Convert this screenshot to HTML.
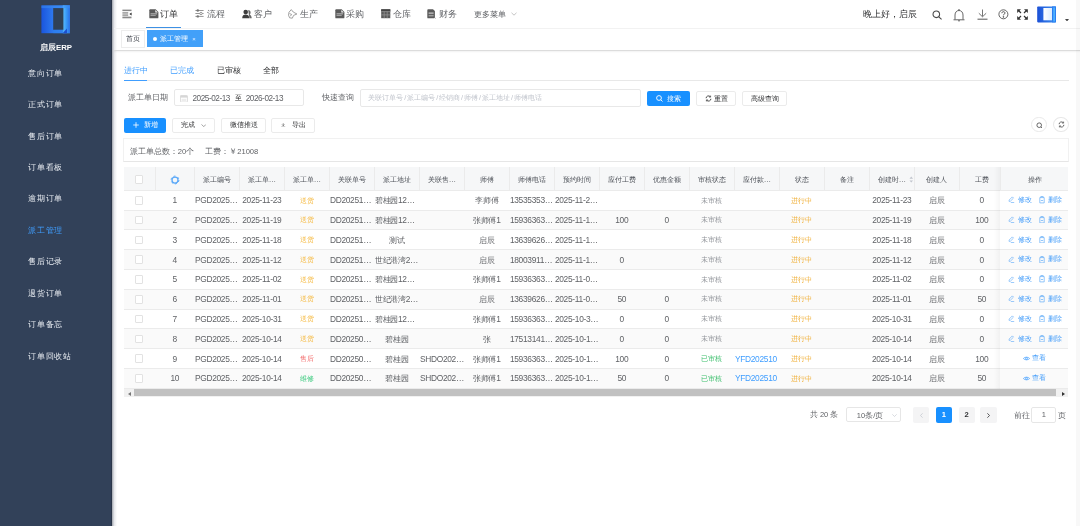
<!DOCTYPE html><html><head><meta charset="utf-8"><style>
*{box-sizing:border-box;margin:0;padding:0}
html,body{width:1080px;height:526px;overflow:hidden;background:#fff;font-family:"Liberation Sans",sans-serif;}
.a{position:absolute;white-space:nowrap}
.side{position:absolute;left:0;top:0;width:112px;height:526px;background:#324159}
.mi{position:absolute;left:28.4px;color:#f2f4f7;font-size:8px;line-height:12px;letter-spacing:0.6px}
.nav{position:absolute;top:8px;font-size:9.3px;color:#606266;line-height:13px}
.ni{position:absolute;top:9.5px}
.btn{position:absolute;border:1px solid #ebebeb;border-radius:2px;background:#fff;font-size:7px;color:#606266;text-align:center;white-space:nowrap}
.th{position:absolute;top:167px;height:24.6px;line-height:24.6px;text-align:center;font-size:7.7px;color:#606266;border-right:1px solid #ebebeb;overflow:hidden;white-space:nowrap;background:#f6f7f8}
.td{position:absolute;text-align:center;font-size:7.8px;color:#606266;overflow:hidden;white-space:nowrap}
.row{position:absolute;left:124px;width:944px;border-bottom:1px solid #ebebeb}
.cb{position:absolute;width:8.6px;height:8.6px;border:1px solid #e2e2e2;border-radius:1px;background:#fff}
i{font-style:normal;padding:0 0.95px}
</style></head><body><div style="position:absolute;left:0;top:0;width:1080px;height:526px;will-change:transform"><div class="side"></div>
<div class="a" style="left:111px;top:0;width:1px;height:526px;background:#2a3649"></div>
<div class="a" style="left:112px;top:0;width:5px;height:526px;background:linear-gradient(90deg,rgba(30,40,60,.42),rgba(60,70,100,.12) 45%,rgba(0,21,41,0))"></div>
<svg class="a" style="left:41px;top:4.5px" width="30" height="29" viewBox="0 0 30 29">
<defs><linearGradient id="lg1" x1="0" x2="1" y1="0" y2="0"><stop offset="0" stop-color="#1a55de"/><stop offset="0.45" stop-color="#2f7cf0"/><stop offset="1" stop-color="#3d92f7"/></linearGradient>
<linearGradient id="lg2" x1="0" x2="1"><stop offset="0" stop-color="#5cc0ff"/><stop offset="0.5" stop-color="#3a9af8"/><stop offset="1" stop-color="#2a6fe6"/></linearGradient></defs>
<rect x="0.4" y="0.4" width="28.5" height="27.8" fill="url(#lg1)"/>
<rect x="21.8" y="0.4" width="7.1" height="27.8" fill="url(#lg2)"/>
<rect x="0.4" y="0.4" width="28.5" height="2.7" fill="#3a8cf4" opacity=".55"/>
<rect x="12.2" y="3.1" width="10.2" height="21.7" fill="#304156"/>
<path d="M21.5 28.2 L26 23.6 L26 28.2 Z" fill="#1d4fcf"/>
<rect x="12.2" y="24.8" width="10.2" height="3.4" fill="#2c7ef0" opacity=".6"/>
</svg>
<div class="a" style="left:40px;top:41.5px;font-size:7.8px;font-weight:bold;color:#fff;line-height:12px">启辰ERP</div>
<div class="mi a" style="top:67.60px;color:#e8ecf1">意向订单</div>
<div class="mi a" style="top:99.05px;color:#e8ecf1">正式订单</div>
<div class="mi a" style="top:130.50px;color:#e8ecf1">售后订单</div>
<div class="mi a" style="top:161.95px;color:#e8ecf1">订单看板</div>
<div class="mi a" style="top:193.40px;color:#e8ecf1">逾期订单</div>
<div class="mi a" style="top:224.85px;color:#409eff">派工管理</div>
<div class="mi a" style="top:256.30px;color:#e8ecf1">售后记录</div>
<div class="mi a" style="top:287.75px;color:#e8ecf1">退货订单</div>
<div class="mi a" style="top:319.20px;color:#e8ecf1">订单备忘</div>
<div class="mi a" style="top:350.65px;color:#e8ecf1">订单回收站</div>
<div class="a" style="left:114px;top:28.2px;width:966px;height:1px;background:#f2f2f2"></div>
<svg class="a" style="left:121.5px;top:8.5px" width="10" height="10" viewBox="0 0 10 10">
<rect x="0.4" y="0.6" width="9.1" height="1.5" fill="#8a8a8a"/><rect x="0.4" y="3.5" width="5.8" height="0.9" fill="#555"/>
<rect x="0.4" y="5.6" width="5.8" height="0.9" fill="#555"/><rect x="0.4" y="7.6" width="9.1" height="1.7" fill="#8a8a8a"/>
<path d="M9.6 3.4 L7.3 5 L9.6 6.6 Z" fill="#333"/></svg>
<div class="nav" style="left:160.3px;color:#303133">订单</div>
<div class="nav" style="left:206.9px;color:#606266">流程</div>
<div class="nav" style="left:253.5px;color:#606266">客户</div>
<div class="nav" style="left:299.7px;color:#606266">生产</div>
<div class="nav" style="left:346px;color:#606266">采购</div>
<div class="nav" style="left:393px;color:#606266">仓库</div>
<div class="nav" style="left:438.7px;color:#606266">财务</div>
<svg class="a" style="left:149px;top:8.8px" width="10" height="10" viewBox="0 0 10 10">
<path d="M1.2 0.3 H6.6 L9.4 3.1 V8.4 Q9.4 9.3 8.5 9.3 H1.2 Q0.3 9.3 0.3 8.4 V1.2 Q0.3 0.3 1.2 0.3 Z" fill="#5a5a5a"/>
<path d="M6.3 0.9 L8.8 3.4 H6.3 Z" fill="#f4f4f4"/>
<rect x="1.5" y="4.3" width="6.6" height="1.1" fill="#b8b8b8"/><rect x="1.5" y="6.1" width="5.2" height="0.9" fill="#a8a8a8"/></svg>
<svg class="a" style="left:334.6px;top:8.8px" width="10" height="10" viewBox="0 0 10 10">
<path d="M1.2 0.3 H6.6 L9.4 3.1 V8.4 Q9.4 9.3 8.5 9.3 H1.2 Q0.3 9.3 0.3 8.4 V1.2 Q0.3 0.3 1.2 0.3 Z" fill="#5a5a5a"/>
<path d="M6.3 0.9 L8.8 3.4 H6.3 Z" fill="#f4f4f4"/>
<rect x="1.5" y="4.3" width="6.6" height="1.1" fill="#b8b8b8"/><rect x="1.5" y="6.1" width="5.2" height="0.9" fill="#a8a8a8"/></svg>
<svg class="a" style="left:195.3px;top:9px" width="9" height="9" viewBox="0 0 9 9" fill="none" stroke="#8a8a8a" stroke-width="0.9">
<line x1="0.4" y1="1.5" x2="8.6" y2="1.5"/><line x1="0.4" y1="4.5" x2="8.6" y2="4.5"/><line x1="0.4" y1="7.4" x2="8.6" y2="7.4"/>
<circle cx="2.8" cy="1.5" r="1.2" fill="#777" stroke="none"/><circle cx="6" cy="4.5" r="1.2" fill="#fff"/><circle cx="2.8" cy="7.4" r="1.2" fill="#777" stroke="none"/></svg>
<svg class="a" style="left:241.8px;top:8.8px" width="10" height="10" viewBox="0 0 10 10">
<path d="M6.2 0.9 C7.7 0.9 8.6 2.1 8.6 3.4 C8.6 4.5 8 5.3 7.4 5.6 C8.9 6.2 9.7 7.6 9.7 9.2 H7.4 Z" fill="#666"/>
<circle cx="3.7" cy="3" r="2.3" fill="#3e3e3e"/><path d="M0.2 9.2 C0.2 6.5 1.7 5.5 3.7 5.5 C5.7 5.5 7.2 6.5 7.2 9.2 Z" fill="#3e3e3e"/></svg>
<svg class="a" style="left:287.8px;top:8.6px" width="10" height="10" viewBox="0 0 10 10" fill="none" stroke="#8a8a8a" stroke-width="0.8">
<path d="M3.3 0.6 L5.2 3 L8.9 5 L5.6 6.4 L4.3 9.2 L1.6 8.8 L0.5 6.2 L1 3.2 Z"/><path d="M1.5 4.6 L3.6 5.4 L2.4 7.2"/></svg>
<svg class="a" style="left:380.7px;top:8.8px" width="10" height="10" viewBox="0 0 10 10">
<rect x="0.2" y="0.3" width="9.1" height="8.9" fill="#5a5a5a"/><rect x="0.2" y="0.3" width="9.1" height="2" fill="#444"/>
<path d="M0.2 2.6 H9.3 M0.2 5.9 H9.3 M3.2 2.6 V9.2 M6.2 2.6 V9.2" stroke="#9a9a9a" stroke-width="0.7"/></svg>
<svg class="a" style="left:427px;top:8.8px" width="9" height="10" viewBox="0 0 9 10">
<path d="M1.2 0.3 H6 L7.9 2 V8.3 Q7.9 9.3 7 9.3 H1.2 Q0.3 9.3 0.3 8.4 V1.2 Q0.3 0.3 1.2 0.3 Z" fill="#5a5a5a"/>
<rect x="1.6" y="3.3" width="5" height="1.8" fill="#aaa"/><rect x="1.6" y="6.3" width="5" height="1" fill="#bbb"/><path d="M7.2 8 L8.6 9.6" stroke="#777" stroke-width="0.6"/></svg>
<div class="a" style="left:146px;top:26.5px;width:35.2px;height:1.4px;background:#3d90e4"></div>
<div class="a" style="left:473.5px;top:8.5px;font-size:7.9px;color:#606266;line-height:11px">更多菜单</div>
<svg class="a" style="left:510.5px;top:12px" width="6" height="4" viewBox="0 0 6 4" fill="none" stroke="#aaa" stroke-width="0.7"><path d="M0.5 0.8 L3 3.2 L5.5 0.8"/></svg>
<div class="a" style="left:862.5px;top:7.8px;font-size:9.2px;color:#303133;line-height:13px">晚上好，启辰</div>
<svg class="a" style="left:932.3px;top:10.2px" width="11" height="10" viewBox="0 0 11 10" fill="none" stroke="#4a4a4a" stroke-width="1.05"><circle cx="4.3" cy="4.3" r="3.3"/><line x1="6.8" y1="6.8" x2="9.6" y2="9.4"/></svg>
<svg class="a" style="left:953px;top:8.5px" width="12" height="13" viewBox="0 0 12 13" fill="none" stroke="#555" stroke-width="0.9"><path d="M2 10.5 V6 C2 3.2 3.8 1.5 6 1.5 C8.2 1.5 10 3.2 10 6 V10.5"/><line x1="0.5" y1="10.8" x2="11.5" y2="10.8"/><path d="M5 11.8 H7"/><circle cx="6" cy="0.9" r="0.4"/></svg>
<svg class="a" style="left:976.5px;top:9px" width="11" height="11" viewBox="0 0 11 11" fill="none" stroke="#666" stroke-width="0.9"><line x1="5.5" y1="0.5" x2="5.5" y2="7.5"/><path d="M1.8 4.2 L5.5 7.8 L9.2 4.2"/><line x1="0.5" y1="10.2" x2="10.5" y2="10.2" stroke-width="1.1"/></svg>
<svg class="a" style="left:997.5px;top:8.8px" width="11" height="11" viewBox="0 0 11 11" fill="none" stroke="#4a4a4a" stroke-width="0.85"><circle cx="5.4" cy="5.3" r="4.5"/><path d="M3.9 4.2 C3.9 3.2 4.6 2.7 5.4 2.7 C6.3 2.7 7 3.2 7 4.1 C7 5.1 5.4 5.1 5.4 6.3" stroke-width="1"/><circle cx="5.4" cy="7.9" r="0.45" fill="#4a4a4a"/></svg>
<svg class="a" style="left:1017px;top:9px" width="11" height="11" viewBox="0 0 11 11" fill="#333" stroke="#333" stroke-width="1.2"><path d="M0.2 0.2 H4 L0.2 4 Z" stroke="none"/><path d="M10.8 0.2 H7 L10.8 4 Z" stroke="none"/><path d="M0.2 10.8 H4 L0.2 7 Z" stroke="none"/><path d="M10.8 10.8 H7 L10.8 7 Z" stroke="none"/><path d="M1.5 1.5 L4 4 M9.5 1.5 L7 4 M1.5 9.5 L4 7 M9.5 9.5 L7 7"/></svg>
<svg class="a" style="left:1037px;top:5.8px" width="20" height="17" viewBox="0 0 20 17">
<defs><linearGradient id="lg3" x1="0" x2="1"><stop offset="0" stop-color="#1b50d6"/><stop offset="1" stop-color="#3c8ff2"/></linearGradient>
<linearGradient id="lg4" x1="0" x2="1"><stop offset="0" stop-color="#ffffff"/><stop offset="1" stop-color="#dcecff"/></linearGradient></defs>
<rect x="0.2" y="0.4" width="18.8" height="16" rx="0.8" fill="url(#lg3)"/><rect x="15" y="0.4" width="4" height="16" fill="#2a7df0"/><rect x="16.2" y="1.5" width="1.8" height="14" fill="#4bb0ff"/>
<rect x="6.4" y="2" width="8.6" height="12.3" fill="url(#lg4)"/></svg>
<svg class="a" style="left:1064.5px;top:18.8px" width="4" height="2.5" viewBox="0 0 4 2.5"><path d="M0 0 H4 L2 2.5 Z" fill="#444"/></svg>
<div class="a" style="left:114px;top:49.8px;width:966px;height:1px;background:#dcdcdc"></div>
<div class="a" style="left:114px;top:51px;width:966px;height:1.5px;background:linear-gradient(rgba(0,0,0,.05),rgba(0,0,0,0))"></div>
<div class="a" style="left:121px;top:30px;width:24px;height:17.5px;border:1px solid #ededed;background:#fff;font-size:7px;color:#3a3e46;text-align:center;line-height:15.5px">首页</div>
<div class="a" style="left:147px;top:30px;width:56px;height:17.3px;background:#42a0f9;"></div>
<div class="a" style="left:152.6px;top:36.6px;width:4.4px;height:4.4px;border-radius:50%;background:#fff"></div>
<div class="a" style="left:160px;top:33px;font-size:6.9px;color:#fff;line-height:11px">派工管理</div>
<div class="a" style="left:192.2px;top:33.5px;font-size:6px;color:#e6f0ff;line-height:11px">×</div>
<div class="a" style="left:1075.5px;top:0px;width:4.5px;height:526px;background:rgba(0,0,0,.028)"></div>
<div class="a" style="left:123.7px;top:64.7px;font-size:8px;color:#409eff;line-height:11px">进行中</div>
<div class="a" style="left:170.3px;top:64.7px;font-size:8px;color:#409eff;line-height:11px">已完成</div>
<div class="a" style="left:216.7px;top:64.7px;font-size:8px;color:#303133;line-height:11px">已审核</div>
<div class="a" style="left:262.5px;top:64.7px;font-size:8px;color:#303133;line-height:11px">全部</div>
<div class="a" style="left:123.5px;top:80.2px;width:945px;height:1px;background:#e8e8e8"></div>
<div class="a" style="left:123.7px;top:79.6px;width:23.6px;height:1.6px;background:#409eff"></div>
<div class="a" style="left:127.8px;top:92px;font-size:8px;color:#606266;line-height:11px">派工单日期</div>
<div class="a" style="left:174.2px;top:89.2px;width:129.5px;height:17.2px;border:1px solid #e8e8e8;border-radius:2px"></div>
<svg class="a" style="left:180.2px;top:94.6px" width="8" height="7.5" viewBox="0 0 8 7.5"><rect x="0.4" y="0.6" width="7" height="6.5" rx="0.6" fill="none" stroke="#d2d2d2" stroke-width="0.8"/><rect x="0.4" y="0.6" width="7" height="2" fill="#d6d6d6"/><rect x="1.6" y="3.8" width="4.6" height="2.2" fill="#ececec"/></svg>
<div class="a" style="left:192.5px;top:93.1px;font-size:8.2px;letter-spacing:-0.45px;color:#606266;line-height:11px">2025-02-13</div>
<div class="a" style="left:234.6px;top:92.4px;font-size:7.4px;color:#222;line-height:11px">至</div>
<div class="a" style="left:245.7px;top:93.1px;font-size:8.2px;letter-spacing:-0.45px;color:#606266;line-height:11px">2026-02-13</div>
<div class="a" style="left:322px;top:92px;font-size:8px;color:#606266;line-height:11px">快速查询</div>
<div class="a" style="left:360.2px;top:89.2px;width:281px;height:18px;border:1px solid #e8e8e8;border-radius:2px"></div>
<div class="a" style="left:368.3px;top:91.8px;font-size:7.35px;color:#c0c4cc;line-height:11px">关联订单号<i>/</i>派工编号<i>/</i>经销商<i>/</i>师傅<i>/</i>派工地址<i>/</i>师傅电话</div>
<div class="a" style="left:647px;top:90.6px;width:42.6px;height:15.4px;background:#1890ff;border-radius:2px"></div>
<svg class="a" style="left:656px;top:95px" width="7" height="7" viewBox="0 0 7 7" fill="none" stroke="#fff" stroke-width="0.9"><circle cx="3" cy="3" r="2.4"/><line x1="4.8" y1="4.8" x2="6.5" y2="6.5"/></svg>
<div class="a" style="left:667.2px;top:93.8px;font-size:6.9px;color:#fff;line-height:10px">搜索</div>
<div class="btn" style="left:695.5px;top:90.6px;width:40.8px;height:15.4px"></div>
<svg class="a" style="left:704.8px;top:94.8px" width="7" height="7" viewBox="0 0 7 7" fill="none" stroke="#333" stroke-width="0.85"><path d="M1.1 3.2 A2.4 2.4 0 0 1 5.2 1.6"/><path d="M5.9 3.8 A2.4 2.4 0 0 1 1.8 5.4"/><path d="M5.6 0.6 V2.1 H4.1" stroke-width="0.7"/><path d="M1.4 6.4 V4.9 H2.9" stroke-width="0.7"/></svg>
<div class="a" style="left:714px;top:93.8px;font-size:6.9px;color:#303133;line-height:10px">重置</div>
<div class="btn" style="left:742.2px;top:90.6px;width:44.5px;height:15.4px"></div>
<div class="a" style="left:751px;top:93.8px;font-size:6.9px;color:#303133;line-height:10px">高级查询</div>
<div class="a" style="left:124px;top:117.7px;width:42.4px;height:15.3px;background:#1890ff;border-radius:2px"></div>
<svg class="a" style="left:133px;top:122.2px" width="6" height="6" viewBox="0 0 6 6"><path d="M3 0.2 V5.8 M0.2 3 H5.8" stroke="#fff" stroke-width="0.8"/></svg>
<div class="a" style="left:144px;top:120px;font-size:6.9px;color:#fff;line-height:10px">新增</div>
<div class="btn" style="left:172.3px;top:117.7px;width:43.1px;height:15.3px"></div>
<div class="a" style="left:181px;top:120px;font-size:7.1px;color:#303133;line-height:10px">完成</div>
<svg class="a" style="left:200.5px;top:123.5px" width="5.5" height="3.5" viewBox="0 0 6 4" fill="none" stroke="#777" stroke-width="0.8"><path d="M0.5 0.5 L3 3 L5.5 0.5"/></svg>
<div class="btn" style="left:221.3px;top:117.7px;width:44.3px;height:15.3px"></div>
<div class="a" style="left:229.6px;top:120px;font-size:6.9px;color:#303133;line-height:10px">微信推送</div>
<div class="btn" style="left:271.4px;top:117.7px;width:43.2px;height:15.3px"></div>
<svg class="a" style="left:281px;top:122.5px" width="4.5" height="4.5" viewBox="0 0 5 5" fill="none" stroke="#555" stroke-width="0.7"><path d="M2.5 0.3 V3 M1.2 1.7 L2.5 3 L3.8 1.7 M0.3 4.5 H4.7"/></svg>
<div class="a" style="left:291.9px;top:120px;font-size:6.9px;color:#303133;line-height:10px">导出</div>
<div class="a" style="left:1031.4px;top:117.1px;width:15.2px;height:15.2px;border:1px solid #e8e8e8;border-radius:50%"></div>
<svg class="a" style="left:1036px;top:121.6px" width="7" height="7" viewBox="0 0 7 7" fill="none" stroke="#444" stroke-width="0.8"><circle cx="3.2" cy="3.2" r="2.3"/><line x1="4.9" y1="4.9" x2="6" y2="6"/></svg>
<div class="a" style="left:1053.3px;top:117.1px;width:15.4px;height:15.2px;border:1px solid #e8e8e8;border-radius:50%"></div>
<svg class="a" style="left:1057.8px;top:121.4px" width="7" height="7" viewBox="0 0 7 7" fill="none" stroke="#444" stroke-width="0.8"><path d="M1.1 3.2 A2.4 2.4 0 0 1 5.2 1.6"/><path d="M5.9 3.8 A2.4 2.4 0 0 1 1.8 5.4"/><path d="M5.6 0.6 V2.1 H4.1" stroke-width="0.7"/><path d="M1.4 6.4 V4.9 H2.9" stroke-width="0.7"/></svg>
<div class="a" style="left:123.3px;top:138.4px;width:945.4px;height:23.4px;border:1px solid #f1f1f1;border-bottom-color:#e6e6e6"></div>
<div class="a" style="left:129.8px;top:145.5px;font-size:7.6px;color:#606266;line-height:11px">派工单总数：20个</div>
<div class="a" style="left:205.2px;top:145.5px;font-size:7.6px;color:#606266;line-height:11px">工费：￥21008</div>
<div class="a" style="left:124px;top:167px;width:944.3px;height:23.80000000000001px;background:#f6f7f8;border-bottom:1px solid #ebebeb"></div>
<div class="a" style="left:155.10px;top:167px;width:1px;height:23.80px;background:#ebebeb"></div>
<div class="a" style="left:194.10px;top:167px;width:1px;height:23.80px;background:#ebebeb"></div>
<div class="a" style="left:239.10px;top:167px;width:1px;height:23.80px;background:#ebebeb"></div>
<div class="a" style="left:194.3px;top:168px;width:45.00px;height:23.80px;line-height:23.80px;text-align:center;font-size:7.3px;color:#4e5259">派工编号</div>
<div class="a" style="left:284.10px;top:167px;width:1px;height:23.80px;background:#ebebeb"></div>
<div class="a" style="left:239.3px;top:168px;width:45.00px;height:23.80px;line-height:23.80px;text-align:center;font-size:7.3px;color:#4e5259">派工单…</div>
<div class="a" style="left:329.10px;top:167px;width:1px;height:23.80px;background:#ebebeb"></div>
<div class="a" style="left:284.3px;top:168px;width:45.00px;height:23.80px;line-height:23.80px;text-align:center;font-size:7.3px;color:#4e5259">派工单…</div>
<div class="a" style="left:374.10px;top:167px;width:1px;height:23.80px;background:#ebebeb"></div>
<div class="a" style="left:329.3px;top:168px;width:45.00px;height:23.80px;line-height:23.80px;text-align:center;font-size:7.3px;color:#4e5259">关联单号</div>
<div class="a" style="left:419.10px;top:167px;width:1px;height:23.80px;background:#ebebeb"></div>
<div class="a" style="left:374.3px;top:168px;width:45.00px;height:23.80px;line-height:23.80px;text-align:center;font-size:7.3px;color:#4e5259">派工地址</div>
<div class="a" style="left:464.10px;top:167px;width:1px;height:23.80px;background:#ebebeb"></div>
<div class="a" style="left:419.3px;top:168px;width:45.00px;height:23.80px;line-height:23.80px;text-align:center;font-size:7.3px;color:#4e5259">关联售…</div>
<div class="a" style="left:509.10px;top:167px;width:1px;height:23.80px;background:#ebebeb"></div>
<div class="a" style="left:464.3px;top:168px;width:45.00px;height:23.80px;line-height:23.80px;text-align:center;font-size:7.3px;color:#4e5259">师傅</div>
<div class="a" style="left:554.10px;top:167px;width:1px;height:23.80px;background:#ebebeb"></div>
<div class="a" style="left:509.3px;top:168px;width:45.00px;height:23.80px;line-height:23.80px;text-align:center;font-size:7.3px;color:#4e5259">师傅电话</div>
<div class="a" style="left:599.10px;top:167px;width:1px;height:23.80px;background:#ebebeb"></div>
<div class="a" style="left:554.3px;top:168px;width:45.00px;height:23.80px;line-height:23.80px;text-align:center;font-size:7.3px;color:#4e5259">预约时间</div>
<div class="a" style="left:644.10px;top:167px;width:1px;height:23.80px;background:#ebebeb"></div>
<div class="a" style="left:599.3px;top:168px;width:45.00px;height:23.80px;line-height:23.80px;text-align:center;font-size:7.3px;color:#4e5259">应付工费</div>
<div class="a" style="left:689.10px;top:167px;width:1px;height:23.80px;background:#ebebeb"></div>
<div class="a" style="left:644.3px;top:168px;width:45.00px;height:23.80px;line-height:23.80px;text-align:center;font-size:7.3px;color:#4e5259">优惠金额</div>
<div class="a" style="left:734.10px;top:167px;width:1px;height:23.80px;background:#ebebeb"></div>
<div class="a" style="left:689.3px;top:168px;width:45.00px;height:23.80px;line-height:23.80px;text-align:center;font-size:7.3px;color:#4e5259">审核状态</div>
<div class="a" style="left:779.10px;top:167px;width:1px;height:23.80px;background:#ebebeb"></div>
<div class="a" style="left:734.3px;top:168px;width:45.00px;height:23.80px;line-height:23.80px;text-align:center;font-size:7.3px;color:#4e5259">应付款…</div>
<div class="a" style="left:824.10px;top:167px;width:1px;height:23.80px;background:#ebebeb"></div>
<div class="a" style="left:779.3px;top:168px;width:45.00px;height:23.80px;line-height:23.80px;text-align:center;font-size:7.3px;color:#4e5259">状态</div>
<div class="a" style="left:869.10px;top:167px;width:1px;height:23.80px;background:#ebebeb"></div>
<div class="a" style="left:824.3px;top:168px;width:45.00px;height:23.80px;line-height:23.80px;text-align:center;font-size:7.3px;color:#4e5259">备注</div>
<div class="a" style="left:914.10px;top:167px;width:1px;height:23.80px;background:#ebebeb"></div>
<div class="a" style="left:869.3px;top:168px;width:45.00px;height:23.80px;line-height:23.80px;text-align:center;font-size:7.3px;color:#4e5259">创建时…</div>
<div class="a" style="left:959.10px;top:167px;width:1px;height:23.80px;background:#ebebeb"></div>
<div class="a" style="left:914.3px;top:168px;width:45.00px;height:23.80px;line-height:23.80px;text-align:center;font-size:7.3px;color:#4e5259">创建人</div>
<div class="a" style="left:1004.10px;top:167px;width:1px;height:23.80px;background:#ebebeb"></div>
<div class="a" style="left:959.3px;top:168px;width:45.00px;height:23.80px;line-height:23.80px;text-align:center;font-size:7.3px;color:#4e5259">工费</div>
<svg class="a" style="left:169.8px;top:174.6px" width="10" height="10" viewBox="0 0 10 10" fill="none" stroke="#5aa8f8"><circle cx="5" cy="5" r="3.0" stroke-width="1.25"/><circle cx="5" cy="5" r="3.9" stroke-width="1.0" stroke-dasharray="2.05 2.05"/></svg>
<div class="cb a" style="left:134.8px;top:175.3px"></div>
<svg class="a" style="left:908.8px;top:176px" width="4.5" height="7" viewBox="0 0 5 8"><path d="M2.5 0.5 L4.5 3 H0.5 Z" fill="#c0c4cc"/><path d="M2.5 7.5 L4.5 5 H0.5 Z" fill="#c0c4cc"/></svg>
<div class="a" style="left:124px;top:190.80px;width:944.3px;height:19.79px;background:#fff;border-bottom:1px solid #ebebeb"></div>
<div class="cb a" style="left:134.8px;top:196.00px"></div>
<div class="a" style="left:155.3px;top:191.30px;width:39.00px;height:19.79px;line-height:19.79px;text-align:center;font-size:8.4px;letter-spacing:-0.3px;font-weight:normal;color:#606266;overflow:hidden">1</div>
<div class="a" style="left:194.3px;top:191.30px;width:45.00px;height:19.79px;line-height:19.79px;text-align:left;padding-left:0.6px;font-size:8.4px;letter-spacing:-0.3px;font-weight:normal;color:#606266;overflow:hidden">PGD2025…</div>
<div class="a" style="left:239.3px;top:191.30px;width:45.00px;height:19.79px;line-height:19.79px;text-align:center;font-size:8.4px;letter-spacing:-0.3px;font-weight:normal;color:#606266;overflow:hidden">2025-11-23</div>
<div class="a" style="left:284.3px;top:190.50px;width:45.00px;height:19.79px;line-height:19.79px;text-align:center;font-size:6.5px;letter-spacing:0px;font-weight:normal;color:#f5b83d;overflow:hidden">送货</div>
<div class="a" style="left:329.3px;top:191.30px;width:45.00px;height:19.79px;line-height:19.79px;text-align:left;padding-left:0.6px;font-size:8.4px;letter-spacing:-0.3px;font-weight:normal;color:#606266;overflow:hidden">DD20251…</div>
<div class="a" style="left:374.3px;top:191.30px;width:45.00px;height:19.79px;line-height:19.79px;text-align:left;padding-left:0.6px;font-size:8.4px;letter-spacing:-0.3px;font-weight:normal;color:#606266;overflow:hidden">碧桂园12…</div>
<div class="a" style="left:464.3px;top:191.30px;width:45.00px;height:19.79px;line-height:19.79px;text-align:center;font-size:8.4px;letter-spacing:-0.3px;font-weight:normal;color:#606266;overflow:hidden">李师傅</div>
<div class="a" style="left:509.3px;top:191.30px;width:45.00px;height:19.79px;line-height:19.79px;text-align:left;padding-left:0.6px;font-size:8.4px;letter-spacing:-0.3px;font-weight:normal;color:#606266;overflow:hidden">13535353…</div>
<div class="a" style="left:554.3px;top:191.30px;width:45.00px;height:19.79px;line-height:19.79px;text-align:left;padding-left:0.6px;font-size:8.4px;letter-spacing:-0.3px;font-weight:normal;color:#606266;overflow:hidden">2025-11-2…</div>
<div class="a" style="left:689.3px;top:190.50px;width:45.00px;height:19.79px;line-height:19.79px;text-align:center;font-size:6.9px;letter-spacing:0px;font-weight:normal;color:#909399;overflow:hidden">未审核</div>
<div class="a" style="left:779.3px;top:190.50px;width:45.00px;height:19.79px;line-height:19.79px;text-align:center;font-size:6.9px;letter-spacing:0px;font-weight:normal;color:#f0b03a;overflow:hidden">进行中</div>
<div class="a" style="left:869.3px;top:191.30px;width:45.00px;height:19.79px;line-height:19.79px;text-align:center;font-size:8.4px;letter-spacing:-0.3px;font-weight:normal;color:#606266;overflow:hidden">2025-11-23</div>
<div class="a" style="left:914.3px;top:191.30px;width:45.00px;height:19.79px;line-height:19.79px;text-align:center;font-size:8.4px;letter-spacing:-0.3px;font-weight:normal;color:#606266;overflow:hidden">启辰</div>
<div class="a" style="left:959.3px;top:191.30px;width:45.00px;height:19.79px;line-height:19.79px;text-align:center;font-size:8.4px;letter-spacing:-0.3px;font-weight:normal;color:#606266;overflow:hidden">0</div>
<div class="a" style="left:124px;top:210.59px;width:944.3px;height:19.79px;background:#fafafa;border-bottom:1px solid #ebebeb"></div>
<div class="cb a" style="left:134.8px;top:215.79px"></div>
<div class="a" style="left:155.3px;top:211.09px;width:39.00px;height:19.79px;line-height:19.79px;text-align:center;font-size:8.4px;letter-spacing:-0.3px;font-weight:normal;color:#606266;overflow:hidden">2</div>
<div class="a" style="left:194.3px;top:211.09px;width:45.00px;height:19.79px;line-height:19.79px;text-align:left;padding-left:0.6px;font-size:8.4px;letter-spacing:-0.3px;font-weight:normal;color:#606266;overflow:hidden">PGD2025…</div>
<div class="a" style="left:239.3px;top:211.09px;width:45.00px;height:19.79px;line-height:19.79px;text-align:center;font-size:8.4px;letter-spacing:-0.3px;font-weight:normal;color:#606266;overflow:hidden">2025-11-19</div>
<div class="a" style="left:284.3px;top:210.29px;width:45.00px;height:19.79px;line-height:19.79px;text-align:center;font-size:6.5px;letter-spacing:0px;font-weight:normal;color:#f5b83d;overflow:hidden">送货</div>
<div class="a" style="left:329.3px;top:211.09px;width:45.00px;height:19.79px;line-height:19.79px;text-align:left;padding-left:0.6px;font-size:8.4px;letter-spacing:-0.3px;font-weight:normal;color:#606266;overflow:hidden">DD20251…</div>
<div class="a" style="left:374.3px;top:211.09px;width:45.00px;height:19.79px;line-height:19.79px;text-align:left;padding-left:0.6px;font-size:8.4px;letter-spacing:-0.3px;font-weight:normal;color:#606266;overflow:hidden">碧桂园12…</div>
<div class="a" style="left:464.3px;top:211.09px;width:45.00px;height:19.79px;line-height:19.79px;text-align:center;font-size:8.4px;letter-spacing:-0.3px;font-weight:normal;color:#606266;overflow:hidden">张师傅1</div>
<div class="a" style="left:509.3px;top:211.09px;width:45.00px;height:19.79px;line-height:19.79px;text-align:left;padding-left:0.6px;font-size:8.4px;letter-spacing:-0.3px;font-weight:normal;color:#606266;overflow:hidden">15936363…</div>
<div class="a" style="left:554.3px;top:211.09px;width:45.00px;height:19.79px;line-height:19.79px;text-align:left;padding-left:0.6px;font-size:8.4px;letter-spacing:-0.3px;font-weight:normal;color:#606266;overflow:hidden">2025-11-1…</div>
<div class="a" style="left:599.3px;top:211.09px;width:45.00px;height:19.79px;line-height:19.79px;text-align:center;font-size:8.4px;letter-spacing:-0.3px;font-weight:normal;color:#606266;overflow:hidden">100</div>
<div class="a" style="left:644.3px;top:211.09px;width:45.00px;height:19.79px;line-height:19.79px;text-align:center;font-size:8.4px;letter-spacing:-0.3px;font-weight:normal;color:#606266;overflow:hidden">0</div>
<div class="a" style="left:689.3px;top:210.29px;width:45.00px;height:19.79px;line-height:19.79px;text-align:center;font-size:6.9px;letter-spacing:0px;font-weight:normal;color:#909399;overflow:hidden">未审核</div>
<div class="a" style="left:779.3px;top:210.29px;width:45.00px;height:19.79px;line-height:19.79px;text-align:center;font-size:6.9px;letter-spacing:0px;font-weight:normal;color:#f0b03a;overflow:hidden">进行中</div>
<div class="a" style="left:869.3px;top:211.09px;width:45.00px;height:19.79px;line-height:19.79px;text-align:center;font-size:8.4px;letter-spacing:-0.3px;font-weight:normal;color:#606266;overflow:hidden">2025-11-19</div>
<div class="a" style="left:914.3px;top:211.09px;width:45.00px;height:19.79px;line-height:19.79px;text-align:center;font-size:8.4px;letter-spacing:-0.3px;font-weight:normal;color:#606266;overflow:hidden">启辰</div>
<div class="a" style="left:959.3px;top:211.09px;width:45.00px;height:19.79px;line-height:19.79px;text-align:center;font-size:8.4px;letter-spacing:-0.3px;font-weight:normal;color:#606266;overflow:hidden">100</div>
<div class="a" style="left:124px;top:230.38px;width:944.3px;height:19.79px;background:#fff;border-bottom:1px solid #ebebeb"></div>
<div class="cb a" style="left:134.8px;top:235.58px"></div>
<div class="a" style="left:155.3px;top:230.88px;width:39.00px;height:19.79px;line-height:19.79px;text-align:center;font-size:8.4px;letter-spacing:-0.3px;font-weight:normal;color:#606266;overflow:hidden">3</div>
<div class="a" style="left:194.3px;top:230.88px;width:45.00px;height:19.79px;line-height:19.79px;text-align:left;padding-left:0.6px;font-size:8.4px;letter-spacing:-0.3px;font-weight:normal;color:#606266;overflow:hidden">PGD2025…</div>
<div class="a" style="left:239.3px;top:230.88px;width:45.00px;height:19.79px;line-height:19.79px;text-align:center;font-size:8.4px;letter-spacing:-0.3px;font-weight:normal;color:#606266;overflow:hidden">2025-11-18</div>
<div class="a" style="left:284.3px;top:230.08px;width:45.00px;height:19.79px;line-height:19.79px;text-align:center;font-size:6.5px;letter-spacing:0px;font-weight:normal;color:#f5b83d;overflow:hidden">送货</div>
<div class="a" style="left:329.3px;top:230.88px;width:45.00px;height:19.79px;line-height:19.79px;text-align:left;padding-left:0.6px;font-size:8.4px;letter-spacing:-0.3px;font-weight:normal;color:#606266;overflow:hidden">DD20251…</div>
<div class="a" style="left:374.3px;top:230.88px;width:45.00px;height:19.79px;line-height:19.79px;text-align:center;font-size:8.4px;letter-spacing:-0.3px;font-weight:normal;color:#606266;overflow:hidden">测试</div>
<div class="a" style="left:464.3px;top:230.88px;width:45.00px;height:19.79px;line-height:19.79px;text-align:center;font-size:8.4px;letter-spacing:-0.3px;font-weight:normal;color:#606266;overflow:hidden">启辰</div>
<div class="a" style="left:509.3px;top:230.88px;width:45.00px;height:19.79px;line-height:19.79px;text-align:left;padding-left:0.6px;font-size:8.4px;letter-spacing:-0.3px;font-weight:normal;color:#606266;overflow:hidden">13639626…</div>
<div class="a" style="left:554.3px;top:230.88px;width:45.00px;height:19.79px;line-height:19.79px;text-align:left;padding-left:0.6px;font-size:8.4px;letter-spacing:-0.3px;font-weight:normal;color:#606266;overflow:hidden">2025-11-1…</div>
<div class="a" style="left:689.3px;top:230.08px;width:45.00px;height:19.79px;line-height:19.79px;text-align:center;font-size:6.9px;letter-spacing:0px;font-weight:normal;color:#909399;overflow:hidden">未审核</div>
<div class="a" style="left:779.3px;top:230.08px;width:45.00px;height:19.79px;line-height:19.79px;text-align:center;font-size:6.9px;letter-spacing:0px;font-weight:normal;color:#f0b03a;overflow:hidden">进行中</div>
<div class="a" style="left:869.3px;top:230.88px;width:45.00px;height:19.79px;line-height:19.79px;text-align:center;font-size:8.4px;letter-spacing:-0.3px;font-weight:normal;color:#606266;overflow:hidden">2025-11-18</div>
<div class="a" style="left:914.3px;top:230.88px;width:45.00px;height:19.79px;line-height:19.79px;text-align:center;font-size:8.4px;letter-spacing:-0.3px;font-weight:normal;color:#606266;overflow:hidden">启辰</div>
<div class="a" style="left:959.3px;top:230.88px;width:45.00px;height:19.79px;line-height:19.79px;text-align:center;font-size:8.4px;letter-spacing:-0.3px;font-weight:normal;color:#606266;overflow:hidden">0</div>
<div class="a" style="left:124px;top:250.17px;width:944.3px;height:19.79px;background:#fafafa;border-bottom:1px solid #ebebeb"></div>
<div class="cb a" style="left:134.8px;top:255.37px"></div>
<div class="a" style="left:155.3px;top:250.67px;width:39.00px;height:19.79px;line-height:19.79px;text-align:center;font-size:8.4px;letter-spacing:-0.3px;font-weight:normal;color:#606266;overflow:hidden">4</div>
<div class="a" style="left:194.3px;top:250.67px;width:45.00px;height:19.79px;line-height:19.79px;text-align:left;padding-left:0.6px;font-size:8.4px;letter-spacing:-0.3px;font-weight:normal;color:#606266;overflow:hidden">PGD2025…</div>
<div class="a" style="left:239.3px;top:250.67px;width:45.00px;height:19.79px;line-height:19.79px;text-align:center;font-size:8.4px;letter-spacing:-0.3px;font-weight:normal;color:#606266;overflow:hidden">2025-11-12</div>
<div class="a" style="left:284.3px;top:249.87px;width:45.00px;height:19.79px;line-height:19.79px;text-align:center;font-size:6.5px;letter-spacing:0px;font-weight:normal;color:#f5b83d;overflow:hidden">送货</div>
<div class="a" style="left:329.3px;top:250.67px;width:45.00px;height:19.79px;line-height:19.79px;text-align:left;padding-left:0.6px;font-size:8.4px;letter-spacing:-0.3px;font-weight:normal;color:#606266;overflow:hidden">DD20251…</div>
<div class="a" style="left:374.3px;top:250.67px;width:45.00px;height:19.79px;line-height:19.79px;text-align:left;padding-left:0.6px;font-size:8.4px;letter-spacing:-0.3px;font-weight:normal;color:#606266;overflow:hidden">世纪港湾2…</div>
<div class="a" style="left:464.3px;top:250.67px;width:45.00px;height:19.79px;line-height:19.79px;text-align:center;font-size:8.4px;letter-spacing:-0.3px;font-weight:normal;color:#606266;overflow:hidden">启辰</div>
<div class="a" style="left:509.3px;top:250.67px;width:45.00px;height:19.79px;line-height:19.79px;text-align:left;padding-left:0.6px;font-size:8.4px;letter-spacing:-0.3px;font-weight:normal;color:#606266;overflow:hidden">18003911…</div>
<div class="a" style="left:554.3px;top:250.67px;width:45.00px;height:19.79px;line-height:19.79px;text-align:left;padding-left:0.6px;font-size:8.4px;letter-spacing:-0.3px;font-weight:normal;color:#606266;overflow:hidden">2025-11-1…</div>
<div class="a" style="left:599.3px;top:250.67px;width:45.00px;height:19.79px;line-height:19.79px;text-align:center;font-size:8.4px;letter-spacing:-0.3px;font-weight:normal;color:#606266;overflow:hidden">0</div>
<div class="a" style="left:689.3px;top:249.87px;width:45.00px;height:19.79px;line-height:19.79px;text-align:center;font-size:6.9px;letter-spacing:0px;font-weight:normal;color:#909399;overflow:hidden">未审核</div>
<div class="a" style="left:779.3px;top:249.87px;width:45.00px;height:19.79px;line-height:19.79px;text-align:center;font-size:6.9px;letter-spacing:0px;font-weight:normal;color:#f0b03a;overflow:hidden">进行中</div>
<div class="a" style="left:869.3px;top:250.67px;width:45.00px;height:19.79px;line-height:19.79px;text-align:center;font-size:8.4px;letter-spacing:-0.3px;font-weight:normal;color:#606266;overflow:hidden">2025-11-12</div>
<div class="a" style="left:914.3px;top:250.67px;width:45.00px;height:19.79px;line-height:19.79px;text-align:center;font-size:8.4px;letter-spacing:-0.3px;font-weight:normal;color:#606266;overflow:hidden">启辰</div>
<div class="a" style="left:959.3px;top:250.67px;width:45.00px;height:19.79px;line-height:19.79px;text-align:center;font-size:8.4px;letter-spacing:-0.3px;font-weight:normal;color:#606266;overflow:hidden">0</div>
<div class="a" style="left:124px;top:269.96px;width:944.3px;height:19.79px;background:#fff;border-bottom:1px solid #ebebeb"></div>
<div class="cb a" style="left:134.8px;top:275.16px"></div>
<div class="a" style="left:155.3px;top:270.46px;width:39.00px;height:19.79px;line-height:19.79px;text-align:center;font-size:8.4px;letter-spacing:-0.3px;font-weight:normal;color:#606266;overflow:hidden">5</div>
<div class="a" style="left:194.3px;top:270.46px;width:45.00px;height:19.79px;line-height:19.79px;text-align:left;padding-left:0.6px;font-size:8.4px;letter-spacing:-0.3px;font-weight:normal;color:#606266;overflow:hidden">PGD2025…</div>
<div class="a" style="left:239.3px;top:270.46px;width:45.00px;height:19.79px;line-height:19.79px;text-align:center;font-size:8.4px;letter-spacing:-0.3px;font-weight:normal;color:#606266;overflow:hidden">2025-11-02</div>
<div class="a" style="left:284.3px;top:269.66px;width:45.00px;height:19.79px;line-height:19.79px;text-align:center;font-size:6.5px;letter-spacing:0px;font-weight:normal;color:#f5b83d;overflow:hidden">送货</div>
<div class="a" style="left:329.3px;top:270.46px;width:45.00px;height:19.79px;line-height:19.79px;text-align:left;padding-left:0.6px;font-size:8.4px;letter-spacing:-0.3px;font-weight:normal;color:#606266;overflow:hidden">DD20251…</div>
<div class="a" style="left:374.3px;top:270.46px;width:45.00px;height:19.79px;line-height:19.79px;text-align:left;padding-left:0.6px;font-size:8.4px;letter-spacing:-0.3px;font-weight:normal;color:#606266;overflow:hidden">碧桂园12…</div>
<div class="a" style="left:464.3px;top:270.46px;width:45.00px;height:19.79px;line-height:19.79px;text-align:center;font-size:8.4px;letter-spacing:-0.3px;font-weight:normal;color:#606266;overflow:hidden">张师傅1</div>
<div class="a" style="left:509.3px;top:270.46px;width:45.00px;height:19.79px;line-height:19.79px;text-align:left;padding-left:0.6px;font-size:8.4px;letter-spacing:-0.3px;font-weight:normal;color:#606266;overflow:hidden">15936363…</div>
<div class="a" style="left:554.3px;top:270.46px;width:45.00px;height:19.79px;line-height:19.79px;text-align:left;padding-left:0.6px;font-size:8.4px;letter-spacing:-0.3px;font-weight:normal;color:#606266;overflow:hidden">2025-11-0…</div>
<div class="a" style="left:689.3px;top:269.66px;width:45.00px;height:19.79px;line-height:19.79px;text-align:center;font-size:6.9px;letter-spacing:0px;font-weight:normal;color:#909399;overflow:hidden">未审核</div>
<div class="a" style="left:779.3px;top:269.66px;width:45.00px;height:19.79px;line-height:19.79px;text-align:center;font-size:6.9px;letter-spacing:0px;font-weight:normal;color:#f0b03a;overflow:hidden">进行中</div>
<div class="a" style="left:869.3px;top:270.46px;width:45.00px;height:19.79px;line-height:19.79px;text-align:center;font-size:8.4px;letter-spacing:-0.3px;font-weight:normal;color:#606266;overflow:hidden">2025-11-02</div>
<div class="a" style="left:914.3px;top:270.46px;width:45.00px;height:19.79px;line-height:19.79px;text-align:center;font-size:8.4px;letter-spacing:-0.3px;font-weight:normal;color:#606266;overflow:hidden">启辰</div>
<div class="a" style="left:959.3px;top:270.46px;width:45.00px;height:19.79px;line-height:19.79px;text-align:center;font-size:8.4px;letter-spacing:-0.3px;font-weight:normal;color:#606266;overflow:hidden">0</div>
<div class="a" style="left:124px;top:289.75px;width:944.3px;height:19.79px;background:#fafafa;border-bottom:1px solid #ebebeb"></div>
<div class="cb a" style="left:134.8px;top:294.95px"></div>
<div class="a" style="left:155.3px;top:290.25px;width:39.00px;height:19.79px;line-height:19.79px;text-align:center;font-size:8.4px;letter-spacing:-0.3px;font-weight:normal;color:#606266;overflow:hidden">6</div>
<div class="a" style="left:194.3px;top:290.25px;width:45.00px;height:19.79px;line-height:19.79px;text-align:left;padding-left:0.6px;font-size:8.4px;letter-spacing:-0.3px;font-weight:normal;color:#606266;overflow:hidden">PGD2025…</div>
<div class="a" style="left:239.3px;top:290.25px;width:45.00px;height:19.79px;line-height:19.79px;text-align:center;font-size:8.4px;letter-spacing:-0.3px;font-weight:normal;color:#606266;overflow:hidden">2025-11-01</div>
<div class="a" style="left:284.3px;top:289.45px;width:45.00px;height:19.79px;line-height:19.79px;text-align:center;font-size:6.5px;letter-spacing:0px;font-weight:normal;color:#f5b83d;overflow:hidden">送货</div>
<div class="a" style="left:329.3px;top:290.25px;width:45.00px;height:19.79px;line-height:19.79px;text-align:left;padding-left:0.6px;font-size:8.4px;letter-spacing:-0.3px;font-weight:normal;color:#606266;overflow:hidden">DD20251…</div>
<div class="a" style="left:374.3px;top:290.25px;width:45.00px;height:19.79px;line-height:19.79px;text-align:left;padding-left:0.6px;font-size:8.4px;letter-spacing:-0.3px;font-weight:normal;color:#606266;overflow:hidden">世纪港湾2…</div>
<div class="a" style="left:464.3px;top:290.25px;width:45.00px;height:19.79px;line-height:19.79px;text-align:center;font-size:8.4px;letter-spacing:-0.3px;font-weight:normal;color:#606266;overflow:hidden">启辰</div>
<div class="a" style="left:509.3px;top:290.25px;width:45.00px;height:19.79px;line-height:19.79px;text-align:left;padding-left:0.6px;font-size:8.4px;letter-spacing:-0.3px;font-weight:normal;color:#606266;overflow:hidden">13639626…</div>
<div class="a" style="left:554.3px;top:290.25px;width:45.00px;height:19.79px;line-height:19.79px;text-align:left;padding-left:0.6px;font-size:8.4px;letter-spacing:-0.3px;font-weight:normal;color:#606266;overflow:hidden">2025-11-0…</div>
<div class="a" style="left:599.3px;top:290.25px;width:45.00px;height:19.79px;line-height:19.79px;text-align:center;font-size:8.4px;letter-spacing:-0.3px;font-weight:normal;color:#606266;overflow:hidden">50</div>
<div class="a" style="left:644.3px;top:290.25px;width:45.00px;height:19.79px;line-height:19.79px;text-align:center;font-size:8.4px;letter-spacing:-0.3px;font-weight:normal;color:#606266;overflow:hidden">0</div>
<div class="a" style="left:689.3px;top:289.45px;width:45.00px;height:19.79px;line-height:19.79px;text-align:center;font-size:6.9px;letter-spacing:0px;font-weight:normal;color:#909399;overflow:hidden">未审核</div>
<div class="a" style="left:779.3px;top:289.45px;width:45.00px;height:19.79px;line-height:19.79px;text-align:center;font-size:6.9px;letter-spacing:0px;font-weight:normal;color:#f0b03a;overflow:hidden">进行中</div>
<div class="a" style="left:869.3px;top:290.25px;width:45.00px;height:19.79px;line-height:19.79px;text-align:center;font-size:8.4px;letter-spacing:-0.3px;font-weight:normal;color:#606266;overflow:hidden">2025-11-01</div>
<div class="a" style="left:914.3px;top:290.25px;width:45.00px;height:19.79px;line-height:19.79px;text-align:center;font-size:8.4px;letter-spacing:-0.3px;font-weight:normal;color:#606266;overflow:hidden">启辰</div>
<div class="a" style="left:959.3px;top:290.25px;width:45.00px;height:19.79px;line-height:19.79px;text-align:center;font-size:8.4px;letter-spacing:-0.3px;font-weight:normal;color:#606266;overflow:hidden">50</div>
<div class="a" style="left:124px;top:309.54px;width:944.3px;height:19.79px;background:#fff;border-bottom:1px solid #ebebeb"></div>
<div class="cb a" style="left:134.8px;top:314.74px"></div>
<div class="a" style="left:155.3px;top:310.04px;width:39.00px;height:19.79px;line-height:19.79px;text-align:center;font-size:8.4px;letter-spacing:-0.3px;font-weight:normal;color:#606266;overflow:hidden">7</div>
<div class="a" style="left:194.3px;top:310.04px;width:45.00px;height:19.79px;line-height:19.79px;text-align:left;padding-left:0.6px;font-size:8.4px;letter-spacing:-0.3px;font-weight:normal;color:#606266;overflow:hidden">PGD2025…</div>
<div class="a" style="left:239.3px;top:310.04px;width:45.00px;height:19.79px;line-height:19.79px;text-align:center;font-size:8.4px;letter-spacing:-0.3px;font-weight:normal;color:#606266;overflow:hidden">2025-10-31</div>
<div class="a" style="left:284.3px;top:309.24px;width:45.00px;height:19.79px;line-height:19.79px;text-align:center;font-size:6.5px;letter-spacing:0px;font-weight:normal;color:#f5b83d;overflow:hidden">送货</div>
<div class="a" style="left:329.3px;top:310.04px;width:45.00px;height:19.79px;line-height:19.79px;text-align:left;padding-left:0.6px;font-size:8.4px;letter-spacing:-0.3px;font-weight:normal;color:#606266;overflow:hidden">DD20251…</div>
<div class="a" style="left:374.3px;top:310.04px;width:45.00px;height:19.79px;line-height:19.79px;text-align:left;padding-left:0.6px;font-size:8.4px;letter-spacing:-0.3px;font-weight:normal;color:#606266;overflow:hidden">碧桂园12…</div>
<div class="a" style="left:464.3px;top:310.04px;width:45.00px;height:19.79px;line-height:19.79px;text-align:center;font-size:8.4px;letter-spacing:-0.3px;font-weight:normal;color:#606266;overflow:hidden">张师傅1</div>
<div class="a" style="left:509.3px;top:310.04px;width:45.00px;height:19.79px;line-height:19.79px;text-align:left;padding-left:0.6px;font-size:8.4px;letter-spacing:-0.3px;font-weight:normal;color:#606266;overflow:hidden">15936363…</div>
<div class="a" style="left:554.3px;top:310.04px;width:45.00px;height:19.79px;line-height:19.79px;text-align:left;padding-left:0.6px;font-size:8.4px;letter-spacing:-0.3px;font-weight:normal;color:#606266;overflow:hidden">2025-10-3…</div>
<div class="a" style="left:599.3px;top:310.04px;width:45.00px;height:19.79px;line-height:19.79px;text-align:center;font-size:8.4px;letter-spacing:-0.3px;font-weight:normal;color:#606266;overflow:hidden">0</div>
<div class="a" style="left:644.3px;top:310.04px;width:45.00px;height:19.79px;line-height:19.79px;text-align:center;font-size:8.4px;letter-spacing:-0.3px;font-weight:normal;color:#606266;overflow:hidden">0</div>
<div class="a" style="left:689.3px;top:309.24px;width:45.00px;height:19.79px;line-height:19.79px;text-align:center;font-size:6.9px;letter-spacing:0px;font-weight:normal;color:#909399;overflow:hidden">未审核</div>
<div class="a" style="left:779.3px;top:309.24px;width:45.00px;height:19.79px;line-height:19.79px;text-align:center;font-size:6.9px;letter-spacing:0px;font-weight:normal;color:#f0b03a;overflow:hidden">进行中</div>
<div class="a" style="left:869.3px;top:310.04px;width:45.00px;height:19.79px;line-height:19.79px;text-align:center;font-size:8.4px;letter-spacing:-0.3px;font-weight:normal;color:#606266;overflow:hidden">2025-10-31</div>
<div class="a" style="left:914.3px;top:310.04px;width:45.00px;height:19.79px;line-height:19.79px;text-align:center;font-size:8.4px;letter-spacing:-0.3px;font-weight:normal;color:#606266;overflow:hidden">启辰</div>
<div class="a" style="left:959.3px;top:310.04px;width:45.00px;height:19.79px;line-height:19.79px;text-align:center;font-size:8.4px;letter-spacing:-0.3px;font-weight:normal;color:#606266;overflow:hidden">0</div>
<div class="a" style="left:124px;top:329.33px;width:944.3px;height:19.79px;background:#fafafa;border-bottom:1px solid #ebebeb"></div>
<div class="cb a" style="left:134.8px;top:334.53px"></div>
<div class="a" style="left:155.3px;top:329.83px;width:39.00px;height:19.79px;line-height:19.79px;text-align:center;font-size:8.4px;letter-spacing:-0.3px;font-weight:normal;color:#606266;overflow:hidden">8</div>
<div class="a" style="left:194.3px;top:329.83px;width:45.00px;height:19.79px;line-height:19.79px;text-align:left;padding-left:0.6px;font-size:8.4px;letter-spacing:-0.3px;font-weight:normal;color:#606266;overflow:hidden">PGD2025…</div>
<div class="a" style="left:239.3px;top:329.83px;width:45.00px;height:19.79px;line-height:19.79px;text-align:center;font-size:8.4px;letter-spacing:-0.3px;font-weight:normal;color:#606266;overflow:hidden">2025-10-14</div>
<div class="a" style="left:284.3px;top:329.03px;width:45.00px;height:19.79px;line-height:19.79px;text-align:center;font-size:6.5px;letter-spacing:0px;font-weight:normal;color:#f5b83d;overflow:hidden">送货</div>
<div class="a" style="left:329.3px;top:329.83px;width:45.00px;height:19.79px;line-height:19.79px;text-align:left;padding-left:0.6px;font-size:8.4px;letter-spacing:-0.3px;font-weight:normal;color:#606266;overflow:hidden">DD20250…</div>
<div class="a" style="left:374.3px;top:329.83px;width:45.00px;height:19.79px;line-height:19.79px;text-align:center;font-size:8.4px;letter-spacing:-0.3px;font-weight:normal;color:#606266;overflow:hidden">碧桂园</div>
<div class="a" style="left:464.3px;top:329.83px;width:45.00px;height:19.79px;line-height:19.79px;text-align:center;font-size:8.4px;letter-spacing:-0.3px;font-weight:normal;color:#606266;overflow:hidden">张</div>
<div class="a" style="left:509.3px;top:329.83px;width:45.00px;height:19.79px;line-height:19.79px;text-align:left;padding-left:0.6px;font-size:8.4px;letter-spacing:-0.3px;font-weight:normal;color:#606266;overflow:hidden">17513141…</div>
<div class="a" style="left:554.3px;top:329.83px;width:45.00px;height:19.79px;line-height:19.79px;text-align:left;padding-left:0.6px;font-size:8.4px;letter-spacing:-0.3px;font-weight:normal;color:#606266;overflow:hidden">2025-10-1…</div>
<div class="a" style="left:599.3px;top:329.83px;width:45.00px;height:19.79px;line-height:19.79px;text-align:center;font-size:8.4px;letter-spacing:-0.3px;font-weight:normal;color:#606266;overflow:hidden">0</div>
<div class="a" style="left:644.3px;top:329.83px;width:45.00px;height:19.79px;line-height:19.79px;text-align:center;font-size:8.4px;letter-spacing:-0.3px;font-weight:normal;color:#606266;overflow:hidden">0</div>
<div class="a" style="left:689.3px;top:329.03px;width:45.00px;height:19.79px;line-height:19.79px;text-align:center;font-size:6.9px;letter-spacing:0px;font-weight:normal;color:#909399;overflow:hidden">未审核</div>
<div class="a" style="left:779.3px;top:329.03px;width:45.00px;height:19.79px;line-height:19.79px;text-align:center;font-size:6.9px;letter-spacing:0px;font-weight:normal;color:#f0b03a;overflow:hidden">进行中</div>
<div class="a" style="left:869.3px;top:329.83px;width:45.00px;height:19.79px;line-height:19.79px;text-align:center;font-size:8.4px;letter-spacing:-0.3px;font-weight:normal;color:#606266;overflow:hidden">2025-10-14</div>
<div class="a" style="left:914.3px;top:329.83px;width:45.00px;height:19.79px;line-height:19.79px;text-align:center;font-size:8.4px;letter-spacing:-0.3px;font-weight:normal;color:#606266;overflow:hidden">启辰</div>
<div class="a" style="left:959.3px;top:329.83px;width:45.00px;height:19.79px;line-height:19.79px;text-align:center;font-size:8.4px;letter-spacing:-0.3px;font-weight:normal;color:#606266;overflow:hidden">0</div>
<div class="a" style="left:124px;top:349.12px;width:944.3px;height:19.79px;background:#fff;border-bottom:1px solid #ebebeb"></div>
<div class="cb a" style="left:134.8px;top:354.32px"></div>
<div class="a" style="left:155.3px;top:349.62px;width:39.00px;height:19.79px;line-height:19.79px;text-align:center;font-size:8.4px;letter-spacing:-0.3px;font-weight:normal;color:#606266;overflow:hidden">9</div>
<div class="a" style="left:194.3px;top:349.62px;width:45.00px;height:19.79px;line-height:19.79px;text-align:left;padding-left:0.6px;font-size:8.4px;letter-spacing:-0.3px;font-weight:normal;color:#606266;overflow:hidden">PGD2025…</div>
<div class="a" style="left:239.3px;top:349.62px;width:45.00px;height:19.79px;line-height:19.79px;text-align:center;font-size:8.4px;letter-spacing:-0.3px;font-weight:normal;color:#606266;overflow:hidden">2025-10-14</div>
<div class="a" style="left:284.3px;top:348.82px;width:45.00px;height:19.79px;line-height:19.79px;text-align:center;font-size:6.5px;letter-spacing:0px;font-weight:normal;color:#f26b6b;overflow:hidden">售后</div>
<div class="a" style="left:329.3px;top:349.62px;width:45.00px;height:19.79px;line-height:19.79px;text-align:left;padding-left:0.6px;font-size:8.4px;letter-spacing:-0.3px;font-weight:normal;color:#606266;overflow:hidden">DD20250…</div>
<div class="a" style="left:374.3px;top:349.62px;width:45.00px;height:19.79px;line-height:19.79px;text-align:center;font-size:8.4px;letter-spacing:-0.3px;font-weight:normal;color:#606266;overflow:hidden">碧桂园</div>
<div class="a" style="left:419.3px;top:349.62px;width:45.00px;height:19.79px;line-height:19.79px;text-align:left;padding-left:0.6px;font-size:8.4px;letter-spacing:-0.3px;font-weight:normal;color:#606266;overflow:hidden">SHDO202…</div>
<div class="a" style="left:464.3px;top:349.62px;width:45.00px;height:19.79px;line-height:19.79px;text-align:center;font-size:8.4px;letter-spacing:-0.3px;font-weight:normal;color:#606266;overflow:hidden">张师傅1</div>
<div class="a" style="left:509.3px;top:349.62px;width:45.00px;height:19.79px;line-height:19.79px;text-align:left;padding-left:0.6px;font-size:8.4px;letter-spacing:-0.3px;font-weight:normal;color:#606266;overflow:hidden">15936363…</div>
<div class="a" style="left:554.3px;top:349.62px;width:45.00px;height:19.79px;line-height:19.79px;text-align:left;padding-left:0.6px;font-size:8.4px;letter-spacing:-0.3px;font-weight:normal;color:#606266;overflow:hidden">2025-10-1…</div>
<div class="a" style="left:599.3px;top:349.62px;width:45.00px;height:19.79px;line-height:19.79px;text-align:center;font-size:8.4px;letter-spacing:-0.3px;font-weight:normal;color:#606266;overflow:hidden">100</div>
<div class="a" style="left:644.3px;top:349.62px;width:45.00px;height:19.79px;line-height:19.79px;text-align:center;font-size:8.4px;letter-spacing:-0.3px;font-weight:normal;color:#606266;overflow:hidden">0</div>
<div class="a" style="left:689.3px;top:348.82px;width:45.00px;height:19.79px;line-height:19.79px;text-align:center;font-size:6.9px;letter-spacing:0px;font-weight:normal;color:#3cbf6c;overflow:hidden">已审核</div>
<div class="a" style="left:734.3px;top:349.62px;width:45.00px;height:19.79px;line-height:19.79px;text-align:left;padding-left:0.6px;font-size:8.4px;letter-spacing:-0.3px;font-weight:normal;color:#409eff;overflow:hidden">YFD202510</div>
<div class="a" style="left:779.3px;top:348.82px;width:45.00px;height:19.79px;line-height:19.79px;text-align:center;font-size:6.9px;letter-spacing:0px;font-weight:normal;color:#f0b03a;overflow:hidden">进行中</div>
<div class="a" style="left:869.3px;top:349.62px;width:45.00px;height:19.79px;line-height:19.79px;text-align:center;font-size:8.4px;letter-spacing:-0.3px;font-weight:normal;color:#606266;overflow:hidden">2025-10-14</div>
<div class="a" style="left:914.3px;top:349.62px;width:45.00px;height:19.79px;line-height:19.79px;text-align:center;font-size:8.4px;letter-spacing:-0.3px;font-weight:normal;color:#606266;overflow:hidden">启辰</div>
<div class="a" style="left:959.3px;top:349.62px;width:45.00px;height:19.79px;line-height:19.79px;text-align:center;font-size:8.4px;letter-spacing:-0.3px;font-weight:normal;color:#606266;overflow:hidden">100</div>
<div class="a" style="left:124px;top:368.91px;width:944.3px;height:19.79px;background:#fafafa;border-bottom:1px solid #ebebeb"></div>
<div class="cb a" style="left:134.8px;top:374.11px"></div>
<div class="a" style="left:155.3px;top:369.41px;width:39.00px;height:19.79px;line-height:19.79px;text-align:center;font-size:8.4px;letter-spacing:-0.3px;font-weight:normal;color:#606266;overflow:hidden">10</div>
<div class="a" style="left:194.3px;top:369.41px;width:45.00px;height:19.79px;line-height:19.79px;text-align:left;padding-left:0.6px;font-size:8.4px;letter-spacing:-0.3px;font-weight:normal;color:#606266;overflow:hidden">PGD2025…</div>
<div class="a" style="left:239.3px;top:369.41px;width:45.00px;height:19.79px;line-height:19.79px;text-align:center;font-size:8.4px;letter-spacing:-0.3px;font-weight:normal;color:#606266;overflow:hidden">2025-10-14</div>
<div class="a" style="left:284.3px;top:368.61px;width:45.00px;height:19.79px;line-height:19.79px;text-align:center;font-size:6.5px;letter-spacing:0px;font-weight:normal;color:#3fcb80;overflow:hidden">维修</div>
<div class="a" style="left:329.3px;top:369.41px;width:45.00px;height:19.79px;line-height:19.79px;text-align:left;padding-left:0.6px;font-size:8.4px;letter-spacing:-0.3px;font-weight:normal;color:#606266;overflow:hidden">DD20250…</div>
<div class="a" style="left:374.3px;top:369.41px;width:45.00px;height:19.79px;line-height:19.79px;text-align:center;font-size:8.4px;letter-spacing:-0.3px;font-weight:normal;color:#606266;overflow:hidden">碧桂园</div>
<div class="a" style="left:419.3px;top:369.41px;width:45.00px;height:19.79px;line-height:19.79px;text-align:left;padding-left:0.6px;font-size:8.4px;letter-spacing:-0.3px;font-weight:normal;color:#606266;overflow:hidden">SHDO202…</div>
<div class="a" style="left:464.3px;top:369.41px;width:45.00px;height:19.79px;line-height:19.79px;text-align:center;font-size:8.4px;letter-spacing:-0.3px;font-weight:normal;color:#606266;overflow:hidden">张师傅1</div>
<div class="a" style="left:509.3px;top:369.41px;width:45.00px;height:19.79px;line-height:19.79px;text-align:left;padding-left:0.6px;font-size:8.4px;letter-spacing:-0.3px;font-weight:normal;color:#606266;overflow:hidden">15936363…</div>
<div class="a" style="left:554.3px;top:369.41px;width:45.00px;height:19.79px;line-height:19.79px;text-align:left;padding-left:0.6px;font-size:8.4px;letter-spacing:-0.3px;font-weight:normal;color:#606266;overflow:hidden">2025-10-1…</div>
<div class="a" style="left:599.3px;top:369.41px;width:45.00px;height:19.79px;line-height:19.79px;text-align:center;font-size:8.4px;letter-spacing:-0.3px;font-weight:normal;color:#606266;overflow:hidden">50</div>
<div class="a" style="left:644.3px;top:369.41px;width:45.00px;height:19.79px;line-height:19.79px;text-align:center;font-size:8.4px;letter-spacing:-0.3px;font-weight:normal;color:#606266;overflow:hidden">0</div>
<div class="a" style="left:689.3px;top:368.61px;width:45.00px;height:19.79px;line-height:19.79px;text-align:center;font-size:6.9px;letter-spacing:0px;font-weight:normal;color:#3cbf6c;overflow:hidden">已审核</div>
<div class="a" style="left:734.3px;top:369.41px;width:45.00px;height:19.79px;line-height:19.79px;text-align:left;padding-left:0.6px;font-size:8.4px;letter-spacing:-0.3px;font-weight:normal;color:#409eff;overflow:hidden">YFD202510</div>
<div class="a" style="left:779.3px;top:368.61px;width:45.00px;height:19.79px;line-height:19.79px;text-align:center;font-size:6.9px;letter-spacing:0px;font-weight:normal;color:#f0b03a;overflow:hidden">进行中</div>
<div class="a" style="left:869.3px;top:369.41px;width:45.00px;height:19.79px;line-height:19.79px;text-align:center;font-size:8.4px;letter-spacing:-0.3px;font-weight:normal;color:#606266;overflow:hidden">2025-10-14</div>
<div class="a" style="left:914.3px;top:369.41px;width:45.00px;height:19.79px;line-height:19.79px;text-align:center;font-size:8.4px;letter-spacing:-0.3px;font-weight:normal;color:#606266;overflow:hidden">启辰</div>
<div class="a" style="left:959.3px;top:369.41px;width:45.00px;height:19.79px;line-height:19.79px;text-align:center;font-size:8.4px;letter-spacing:-0.3px;font-weight:normal;color:#606266;overflow:hidden">50</div>
<div class="a" style="left:994px;top:167px;width:6px;height:221.70px;background:linear-gradient(90deg,rgba(0,0,0,0),rgba(0,0,0,.035))"></div>
<div class="a" style="left:1000.1px;top:167px;width:68.20px;height:23.80px;background:#f6f7f8;border-bottom:1px solid #ebebeb;border-left:1px solid #ebebeb;line-height:25.80px;text-align:center;font-size:7.3px;color:#4e5259">操作</div>
<div class="a" style="left:1000.1px;top:190.80px;width:68.20px;height:19.79px;background:#fff;border-bottom:1px solid #ebebeb"></div>
<svg class="a" style="left:1008.4px;top:196.40px" width="6.5" height="7" viewBox="0 0 6.5 7" fill="none" stroke="#5aa8f8" stroke-width="0.6"><path d="M1 5.4 L1.2 4 L4.3 0.9 L5.5 2.1 L2.4 5.2 Z"/><path d="M2.8 6.5 H6.2"/></svg>
<div class="a" style="left:1017.7px;top:190.00px;line-height:19.79px;font-size:6.9px;color:#4aa0fa">修改</div>
<svg class="a" style="left:1038.6px;top:196.20px" width="6" height="7.5" viewBox="0 0 6 7.5" fill="none" stroke="#5aa8f8" stroke-width="0.65"><path d="M0.8 1.6 H5.2 V6.9 H0.8 Z M1.8 1.6 V0.5 H4.2 V1.6 M1.9 4.5 H4.1"/></svg>
<div class="a" style="left:1047.6px;top:190.00px;line-height:19.79px;font-size:6.9px;color:#4aa0fa">删除</div>
<div class="a" style="left:1000.1px;top:210.59px;width:68.20px;height:19.79px;background:#fafafa;border-bottom:1px solid #ebebeb"></div>
<svg class="a" style="left:1008.4px;top:216.19px" width="6.5" height="7" viewBox="0 0 6.5 7" fill="none" stroke="#5aa8f8" stroke-width="0.6"><path d="M1 5.4 L1.2 4 L4.3 0.9 L5.5 2.1 L2.4 5.2 Z"/><path d="M2.8 6.5 H6.2"/></svg>
<div class="a" style="left:1017.7px;top:209.79px;line-height:19.79px;font-size:6.9px;color:#4aa0fa">修改</div>
<svg class="a" style="left:1038.6px;top:215.99px" width="6" height="7.5" viewBox="0 0 6 7.5" fill="none" stroke="#5aa8f8" stroke-width="0.65"><path d="M0.8 1.6 H5.2 V6.9 H0.8 Z M1.8 1.6 V0.5 H4.2 V1.6 M1.9 4.5 H4.1"/></svg>
<div class="a" style="left:1047.6px;top:209.79px;line-height:19.79px;font-size:6.9px;color:#4aa0fa">删除</div>
<div class="a" style="left:1000.1px;top:230.38px;width:68.20px;height:19.79px;background:#fff;border-bottom:1px solid #ebebeb"></div>
<svg class="a" style="left:1008.4px;top:235.98px" width="6.5" height="7" viewBox="0 0 6.5 7" fill="none" stroke="#5aa8f8" stroke-width="0.6"><path d="M1 5.4 L1.2 4 L4.3 0.9 L5.5 2.1 L2.4 5.2 Z"/><path d="M2.8 6.5 H6.2"/></svg>
<div class="a" style="left:1017.7px;top:229.58px;line-height:19.79px;font-size:6.9px;color:#4aa0fa">修改</div>
<svg class="a" style="left:1038.6px;top:235.78px" width="6" height="7.5" viewBox="0 0 6 7.5" fill="none" stroke="#5aa8f8" stroke-width="0.65"><path d="M0.8 1.6 H5.2 V6.9 H0.8 Z M1.8 1.6 V0.5 H4.2 V1.6 M1.9 4.5 H4.1"/></svg>
<div class="a" style="left:1047.6px;top:229.58px;line-height:19.79px;font-size:6.9px;color:#4aa0fa">删除</div>
<div class="a" style="left:1000.1px;top:250.17px;width:68.20px;height:19.79px;background:#fafafa;border-bottom:1px solid #ebebeb"></div>
<svg class="a" style="left:1008.4px;top:255.77px" width="6.5" height="7" viewBox="0 0 6.5 7" fill="none" stroke="#5aa8f8" stroke-width="0.6"><path d="M1 5.4 L1.2 4 L4.3 0.9 L5.5 2.1 L2.4 5.2 Z"/><path d="M2.8 6.5 H6.2"/></svg>
<div class="a" style="left:1017.7px;top:249.37px;line-height:19.79px;font-size:6.9px;color:#4aa0fa">修改</div>
<svg class="a" style="left:1038.6px;top:255.57px" width="6" height="7.5" viewBox="0 0 6 7.5" fill="none" stroke="#5aa8f8" stroke-width="0.65"><path d="M0.8 1.6 H5.2 V6.9 H0.8 Z M1.8 1.6 V0.5 H4.2 V1.6 M1.9 4.5 H4.1"/></svg>
<div class="a" style="left:1047.6px;top:249.37px;line-height:19.79px;font-size:6.9px;color:#4aa0fa">删除</div>
<div class="a" style="left:1000.1px;top:269.96px;width:68.20px;height:19.79px;background:#fff;border-bottom:1px solid #ebebeb"></div>
<svg class="a" style="left:1008.4px;top:275.56px" width="6.5" height="7" viewBox="0 0 6.5 7" fill="none" stroke="#5aa8f8" stroke-width="0.6"><path d="M1 5.4 L1.2 4 L4.3 0.9 L5.5 2.1 L2.4 5.2 Z"/><path d="M2.8 6.5 H6.2"/></svg>
<div class="a" style="left:1017.7px;top:269.16px;line-height:19.79px;font-size:6.9px;color:#4aa0fa">修改</div>
<svg class="a" style="left:1038.6px;top:275.36px" width="6" height="7.5" viewBox="0 0 6 7.5" fill="none" stroke="#5aa8f8" stroke-width="0.65"><path d="M0.8 1.6 H5.2 V6.9 H0.8 Z M1.8 1.6 V0.5 H4.2 V1.6 M1.9 4.5 H4.1"/></svg>
<div class="a" style="left:1047.6px;top:269.16px;line-height:19.79px;font-size:6.9px;color:#4aa0fa">删除</div>
<div class="a" style="left:1000.1px;top:289.75px;width:68.20px;height:19.79px;background:#fafafa;border-bottom:1px solid #ebebeb"></div>
<svg class="a" style="left:1008.4px;top:295.35px" width="6.5" height="7" viewBox="0 0 6.5 7" fill="none" stroke="#5aa8f8" stroke-width="0.6"><path d="M1 5.4 L1.2 4 L4.3 0.9 L5.5 2.1 L2.4 5.2 Z"/><path d="M2.8 6.5 H6.2"/></svg>
<div class="a" style="left:1017.7px;top:288.95px;line-height:19.79px;font-size:6.9px;color:#4aa0fa">修改</div>
<svg class="a" style="left:1038.6px;top:295.15px" width="6" height="7.5" viewBox="0 0 6 7.5" fill="none" stroke="#5aa8f8" stroke-width="0.65"><path d="M0.8 1.6 H5.2 V6.9 H0.8 Z M1.8 1.6 V0.5 H4.2 V1.6 M1.9 4.5 H4.1"/></svg>
<div class="a" style="left:1047.6px;top:288.95px;line-height:19.79px;font-size:6.9px;color:#4aa0fa">删除</div>
<div class="a" style="left:1000.1px;top:309.54px;width:68.20px;height:19.79px;background:#fff;border-bottom:1px solid #ebebeb"></div>
<svg class="a" style="left:1008.4px;top:315.14px" width="6.5" height="7" viewBox="0 0 6.5 7" fill="none" stroke="#5aa8f8" stroke-width="0.6"><path d="M1 5.4 L1.2 4 L4.3 0.9 L5.5 2.1 L2.4 5.2 Z"/><path d="M2.8 6.5 H6.2"/></svg>
<div class="a" style="left:1017.7px;top:308.74px;line-height:19.79px;font-size:6.9px;color:#4aa0fa">修改</div>
<svg class="a" style="left:1038.6px;top:314.94px" width="6" height="7.5" viewBox="0 0 6 7.5" fill="none" stroke="#5aa8f8" stroke-width="0.65"><path d="M0.8 1.6 H5.2 V6.9 H0.8 Z M1.8 1.6 V0.5 H4.2 V1.6 M1.9 4.5 H4.1"/></svg>
<div class="a" style="left:1047.6px;top:308.74px;line-height:19.79px;font-size:6.9px;color:#4aa0fa">删除</div>
<div class="a" style="left:1000.1px;top:329.33px;width:68.20px;height:19.79px;background:#fafafa;border-bottom:1px solid #ebebeb"></div>
<svg class="a" style="left:1008.4px;top:334.93px" width="6.5" height="7" viewBox="0 0 6.5 7" fill="none" stroke="#5aa8f8" stroke-width="0.6"><path d="M1 5.4 L1.2 4 L4.3 0.9 L5.5 2.1 L2.4 5.2 Z"/><path d="M2.8 6.5 H6.2"/></svg>
<div class="a" style="left:1017.7px;top:328.53px;line-height:19.79px;font-size:6.9px;color:#4aa0fa">修改</div>
<svg class="a" style="left:1038.6px;top:334.73px" width="6" height="7.5" viewBox="0 0 6 7.5" fill="none" stroke="#5aa8f8" stroke-width="0.65"><path d="M0.8 1.6 H5.2 V6.9 H0.8 Z M1.8 1.6 V0.5 H4.2 V1.6 M1.9 4.5 H4.1"/></svg>
<div class="a" style="left:1047.6px;top:328.53px;line-height:19.79px;font-size:6.9px;color:#4aa0fa">删除</div>
<div class="a" style="left:1000.1px;top:349.12px;width:68.20px;height:19.79px;background:#fff;border-bottom:1px solid #ebebeb"></div>
<svg class="a" style="left:1023px;top:356.32px" width="7" height="5" viewBox="0 0 7 5" fill="none" stroke="#409eff" stroke-width="0.7"><path d="M0.4 2.5 C1.5 0.7 5.5 0.7 6.6 2.5 C5.5 4.3 1.5 4.3 0.4 2.5 Z"/><circle cx="3.5" cy="2.5" r="0.9"/></svg>
<div class="a" style="left:1032.2px;top:348.32px;line-height:19.79px;font-size:6.9px;color:#4aa0fa">查看</div>
<div class="a" style="left:1000.1px;top:368.91px;width:68.20px;height:19.79px;background:#fafafa;border-bottom:1px solid #ebebeb"></div>
<svg class="a" style="left:1023px;top:376.11px" width="7" height="5" viewBox="0 0 7 5" fill="none" stroke="#409eff" stroke-width="0.7"><path d="M0.4 2.5 C1.5 0.7 5.5 0.7 6.6 2.5 C5.5 4.3 1.5 4.3 0.4 2.5 Z"/><circle cx="3.5" cy="2.5" r="0.9"/></svg>
<div class="a" style="left:1032.2px;top:368.11px;line-height:19.79px;font-size:6.9px;color:#4aa0fa">查看</div>
<div class="a" style="left:124px;top:388.70px;width:944.3px;height:8.30px;background:#f1f1f1"></div>
<div class="a" style="left:134.2px;top:389.3px;width:921.6px;height:6.5px;background:#c1c1c1"></div>
<svg class="a" style="left:127.5px;top:391.50px" width="3" height="4" viewBox="0 0 3 4"><path d="M3 0 V4 L0 2 Z" fill="#777"/></svg>
<svg class="a" style="left:1062px;top:391.50px" width="3" height="4" viewBox="0 0 3 4"><path d="M0 0 V4 L3 2 Z" fill="#333"/></svg>
<div class="a" style="left:809.8px;top:409px;font-size:7.5px;color:#606266;line-height:11px">共 20 条</div>
<div class="a" style="left:845.6px;top:407.3px;width:55.6px;height:15px;border:1px solid #e6e6e6;border-radius:2px"></div>
<div class="a" style="left:856.8px;top:409.5px;font-size:7.5px;color:#606266;line-height:11px">10条/页</div>
<svg class="a" style="left:892.2px;top:413.6px" width="5" height="3" viewBox="0 0 5 3" fill="none" stroke="#c0c4cc" stroke-width="0.6"><path d="M0.3 0.3 L2.5 2.5 L4.7 0.3"/></svg>
<div class="a" style="left:912.8px;top:407.2px;width:16.5px;height:15.7px;background:#f4f4f5;border-radius:2px"></div>
<svg class="a" style="left:919.5px;top:412.6px" width="3" height="5" viewBox="0 0 3 5" fill="none" stroke="#c0c4cc" stroke-width="0.7"><path d="M2.6 0.3 L0.5 2.5 L2.6 4.7"/></svg>
<div class="a" style="left:935.5px;top:407.2px;width:16.8px;height:15.7px;background:#1890ff;border-radius:2px;color:#fff;font-size:7.6px;font-weight:bold;text-align:center;line-height:15.7px">1</div>
<div class="a" style="left:958.5px;top:407.2px;width:16.2px;height:15.7px;background:#f4f4f5;border-radius:2px;color:#303133;font-size:7.6px;font-weight:bold;text-align:center;line-height:15.7px">2</div>
<div class="a" style="left:980.4px;top:407.2px;width:16.6px;height:15.7px;background:#f4f4f5;border-radius:2px"></div>
<svg class="a" style="left:987.2px;top:412.6px" width="3" height="5" viewBox="0 0 3 5" fill="none" stroke="#303133" stroke-width="0.8"><path d="M0.4 0.3 L2.5 2.5 L0.4 4.7"/></svg>
<div class="a" style="left:1013.5px;top:409.5px;font-size:7.5px;color:#606266;line-height:11px">前往</div>
<div class="a" style="left:1031.4px;top:407.2px;width:25.1px;height:15.7px;border:1px solid #e6e6e6;border-radius:2px;font-size:7.5px;color:#606266;text-align:center;line-height:13.7px">1</div>
<div class="a" style="left:1058px;top:409.5px;font-size:7.5px;color:#606266;line-height:11px">页</div></div></body></html>
